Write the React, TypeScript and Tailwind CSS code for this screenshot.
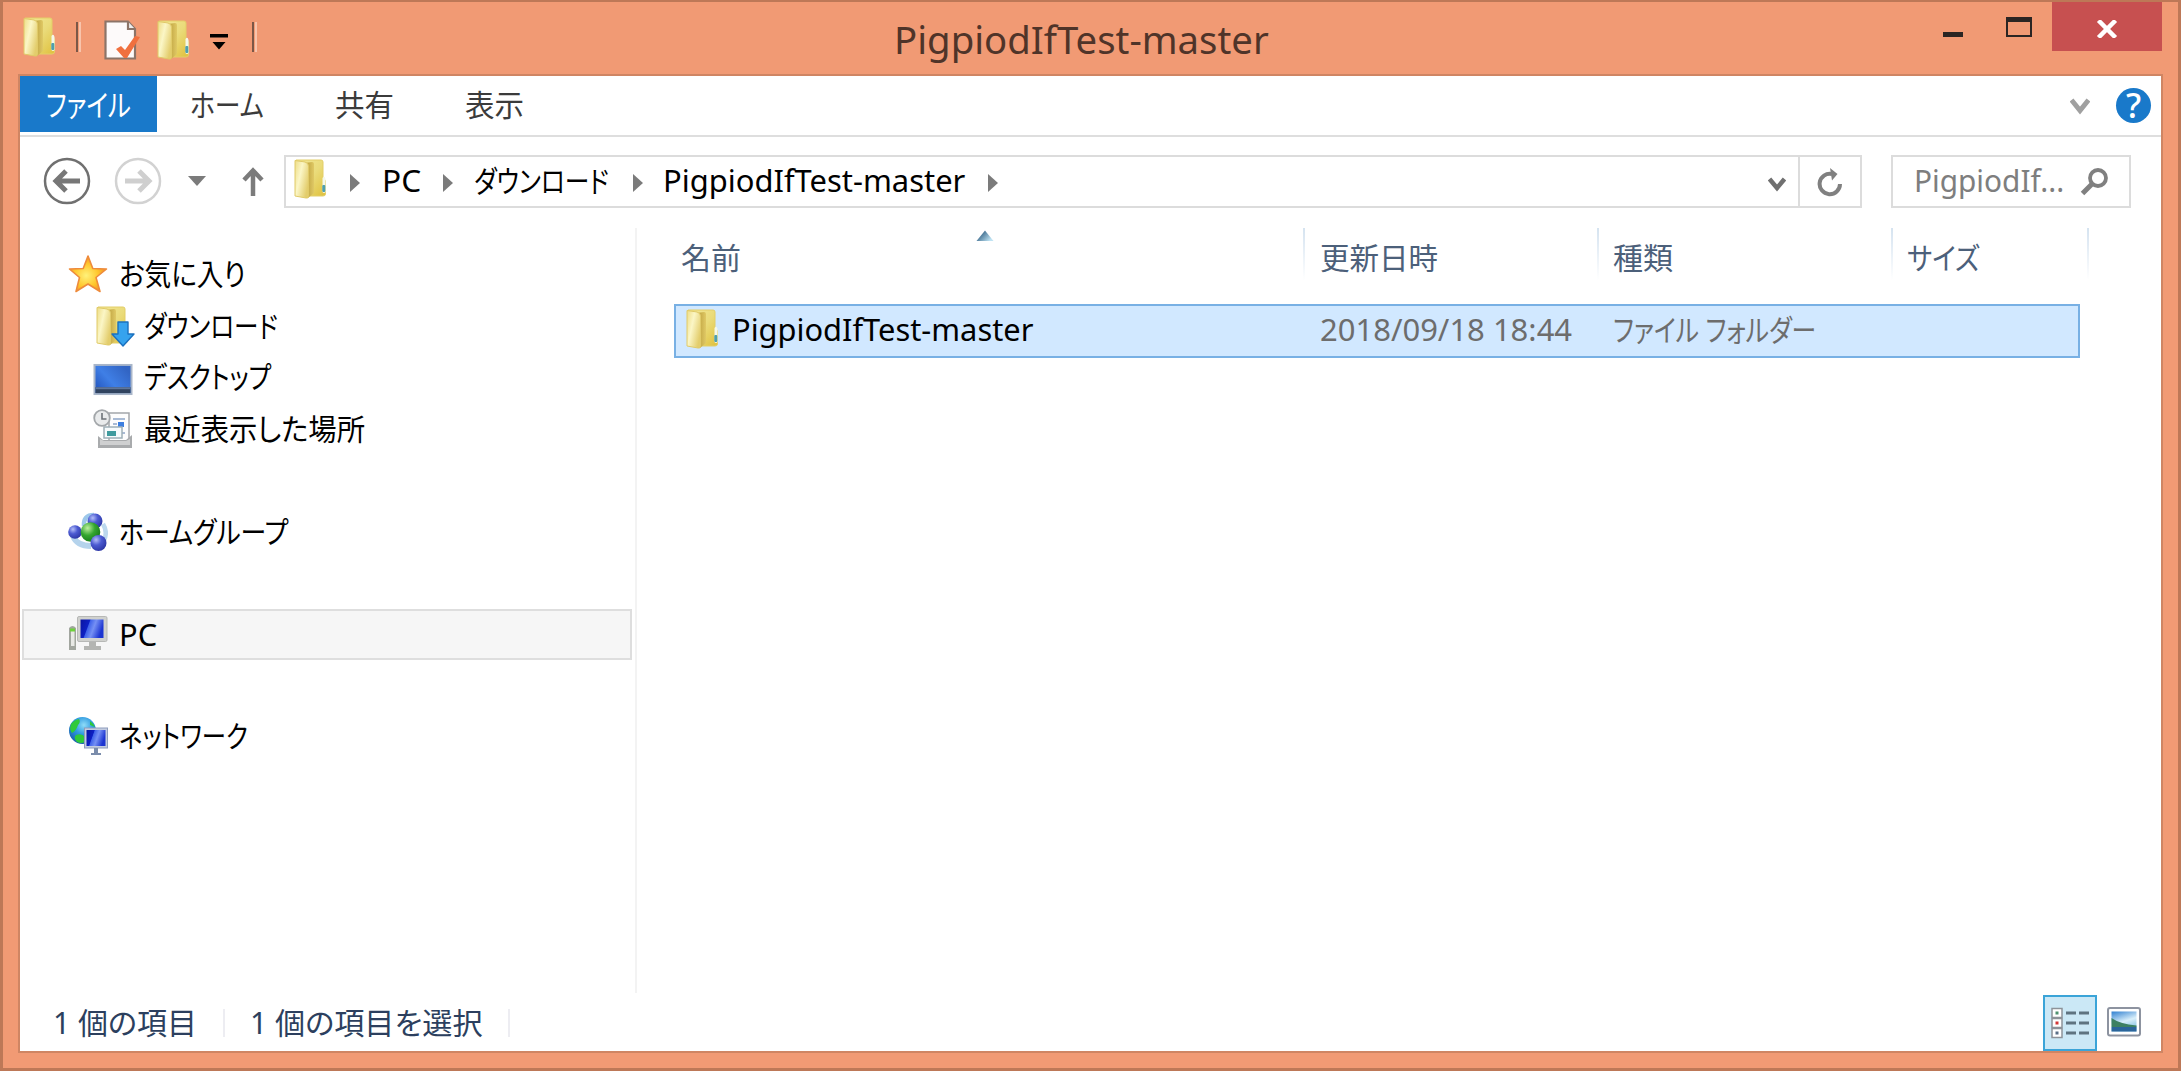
import { useLayoutEffect, useRef, useState } from "react";
import type { ReactNode } from "react";

/** A single line of text, condensed or widened to occupy exactly `w` pixels. */
function Line({ w, children, className = "" }: { w: number; children: ReactNode; className?: string }) {
  const ref = useRef<HTMLSpanElement>(null);
  const [scale, setScale] = useState(1);
  useLayoutEffect(() => {
    if (ref.current) setScale(w / ref.current.offsetWidth);
  }, [w]);
  return (
    <span className={"block shrink-0 whitespace-nowrap " + className} style={{ width: w }}>
      <span ref={ref} className="inline-block origin-left" style={{ transform: `scaleX(${scale})` }}>
        {children}
      </span>
    </span>
  );
}

function Folder({ className = "", arrow = false }: { className?: string; arrow?: boolean }) {
  return (
    <svg viewBox="0 0 32 40" className={"block h-[40px] w-[32px] shrink-0 overflow-visible " + className}>
      <defs>
        <linearGradient id="fBack" x1="0" x2="1" y1="0" y2="1">
          <stop offset="0" stopColor="#f3e896" />
          <stop offset="0.500" stopColor="#eadb7a" />
          <stop offset="1" stopColor="#dfc03c" />
        </linearGradient>
        <linearGradient id="fFront" x1="0" x2="1" y1="0" y2="0.600">
          <stop offset="0" stopColor="#eedd86" />
          <stop offset="0.450" stopColor="#fbf6c6" />
          <stop offset="1" stopColor="#e3cd6c" />
        </linearGradient>
        <linearGradient id="fMid" x1="0" x2="1" y1="0" y2="0">
          <stop offset="0" stopColor="#b99c3a" />
          <stop offset="1" stopColor="#e0c965" />
        </linearGradient>
      </defs>
      <path d="M2 1H27Q29 1 29 3V18L31.500 22V35Q31.500 37 29 37H14L2 36Z" fill="url(#fBack)" stroke="#e3ce68" strokeWidth="1" />
      <path d="M11 4L18 3Q20 3 20 5V34L14 39Z" fill="url(#fMid)" />
      <path d="M1 1.500L11 3Q14.500 4 14.500 7V37.500Q14.500 39.500 12 39L1 37Z" fill="url(#fFront)" stroke="#e0ca68" strokeWidth="1" />
      {!arrow && <path d="M28.500 19Q30.500 16 31.500 20V33Q30 35 28.500 33Z" fill="#f4f7ea" />}
      {!arrow && <rect x="28.300" y="26" width="3" height="7" rx="1" fill="#4f9fae" />}
      {arrow && (
        <path d="M22 16H32V28H38L27 40L16 28H22Z" fill="#36a3ee" stroke="#1b71bf" strokeWidth="1.400" strokeLinejoin="round" />
      )}
    </svg>
  );
}

function CheckedPage() {
  return (
    <svg viewBox="0 0 36 40" className="ml-[23px] block h-[40px] w-[36px] shrink-0">
      <path d="M1.500 1.500H24L31 9V38.500H1.500Z" fill="#fdfafa" stroke="#8c7468" strokeWidth="2.200" />
      <path d="M24 1.500V9H31" fill="#eee" stroke="#8c7468" strokeWidth="2.200" />
      <path d="M12 29L17 26L21 30L31 16L36 17L23 38H20Z" fill="#f0703f" />
    </svg>
  );
}

function Star() {
  return (
    <svg viewBox="0 0 40 40" className="block h-[40px] w-[40px] shrink-0">
      <defs>
        <radialGradient id="star" cx="0.450" cy="0.550" r="0.600">
          <stop offset="0" stopColor="#fff27a" />
          <stop offset="0.550" stopColor="#ffc62c" />
          <stop offset="1" stopColor="#f08322" />
        </radialGradient>
      </defs>
      <path d="M20 2L24.800 14.500L38.500 15L28 23.500L32 37.500L20 30L8 37.500L11.500 23.500L1.500 15L15.200 14.500Z" fill="url(#star)" stroke="#ee8b3c" strokeWidth="1.600" strokeLinejoin="round" />
    </svg>
  );
}

function Desktop() {
  return (
    <svg viewBox="0 0 40 34" preserveAspectRatio="none" className="block h-[33px] w-[40px] shrink-0">
      <defs>
        <linearGradient id="desk" x1="0" x2="1" y1="1" y2="0.300">
          <stop offset="0" stopColor="#1f4fb8" />
          <stop offset="0.500" stopColor="#3f7fe6" />
          <stop offset="1" stopColor="#3265c4" />
        </linearGradient>
      </defs>
      <rect x="0.500" y="1" width="39" height="32" fill="#a9b6c9" />
      <rect x="2.500" y="3" width="35" height="28" fill="url(#desk)" />
      <rect x="2.500" y="25" width="35" height="6" fill="#30435f" />
      <rect x="2.500" y="25" width="35" height="2" fill="#5f769b" />
    </svg>
  );
}

function Recent() {
  return (
    <svg viewBox="0 0 40 40" className="block h-[40px] w-[40px] shrink-0">
      <rect x="16" y="4" width="20" height="28" fill="#fdfdfd" stroke="#a3a6aa" strokeWidth="1.500" />
      <path d="M20 10H32M20 15H24M20 20H24M27 24H32" stroke="#a9bbd5" strokeWidth="2" />
      <rect x="25" y="13" width="6" height="5" fill="#3d7fe0" />
      <rect x="11" y="18" width="18" height="11" fill="#f7fbfc" stroke="#9fb0b8" strokeWidth="1.500" />
      <rect x="14" y="22" width="9" height="5" fill="#3f9b9e" />
      <circle cx="9" cy="9" r="7.800" fill="#e9ebec" stroke="#a3a7aa" strokeWidth="1.800" />
      <path d="M9 4V10H13.500" fill="none" stroke="#6d7378" strokeWidth="1.600" />
      <path d="M5 27L10 31H33L39 26V39H5Z" fill="#a9abad" />
      <path d="M7 30L11 32H33L37 30V36H7Z" fill="#cfd0d1" />
    </svg>
  );
}

function HomeGroup() {
  return (
    <svg viewBox="0 0 40 40" className="block h-[40px] w-[40px] shrink-0">
      <defs>
        <radialGradient id="hb" cx="0.350" cy="0.300" r="0.750">
          <stop offset="0" stopColor="#b3bdf8" />
          <stop offset="0.450" stopColor="#4c5bd2" />
          <stop offset="1" stopColor="#2b35a3" />
        </radialGradient>
        <radialGradient id="hg" cx="0.350" cy="0.300" r="0.750">
          <stop offset="0" stopColor="#bff0a0" />
          <stop offset="0.500" stopColor="#34a62f" />
          <stop offset="1" stopColor="#167a1a" />
        </radialGradient>
      </defs>
      <path d="M16 14Q15 3 26 3" fill="none" stroke="#9cc7ea" strokeWidth="4.500" />
      <path d="M35 12Q40 20 36 28" fill="none" stroke="#bcd8ee" strokeWidth="4.500" />
      <path d="M5 24Q9 34 23 34" fill="none" stroke="#b5d3ec" strokeWidth="6" />
      <circle cx="27" cy="9" r="7.500" fill="url(#hb)" />
      <circle cx="7" cy="20" r="6.800" fill="url(#hb)" />
      <circle cx="22.500" cy="20" r="9.800" fill="url(#hg)" />
      <circle cx="30.500" cy="31" r="8" fill="url(#hb)" />
    </svg>
  );
}

function ScreenGradient() {
  return (
    <defs>
      <linearGradient id="scr" x1="0" x2="1" y1="0" y2="0.300">
        <stop offset="0" stopColor="#0a14a0" />
        <stop offset="0.380" stopColor="#0d20c4" />
        <stop offset="0.420" stopColor="#3f63ea" />
        <stop offset="0.650" stopColor="#7590f4" />
        <stop offset="1" stopColor="#1c35d2" />
      </linearGradient>
    </defs>
  );
}

function Computer() {
  return (
    <svg viewBox="0 0 40 36" className="mb-[3px] block h-[36px] w-[40px] shrink-0">
      <ScreenGradient />
      <rect x="9.500" y="1.500" width="29.500" height="25" rx="1.500" fill="#d0d1ce" stroke="#b7b8b6" />
      <rect x="12.500" y="4.500" width="23" height="18.500" fill="url(#scr)" />
      <path d="M21 27H28V31H33V35H16V31H21Z" fill="#b4b5b2" />
      <path d="M1 13Q4.500 9 8 13V35H1Z" fill="#a2a69f" />
      <rect x="3" y="15" width="3.500" height="16" fill="#e8e9e5" />
      <rect x="2" y="13.500" width="5" height="3" fill="#6ed23c" />
    </svg>
  );
}

function Network() {
  return (
    <svg viewBox="0 0 40 40" className="block h-[40px] w-[40px] shrink-0">
      <ScreenGradient />
      <defs>
        <radialGradient id="globe" cx="0.550" cy="0.300" r="0.750">
          <stop offset="0" stopColor="#8fdcf8" />
          <stop offset="0.450" stopColor="#2f9ae0" />
          <stop offset="1" stopColor="#1459a8" />
        </radialGradient>
      </defs>
      <circle cx="14.500" cy="14.500" r="13.500" fill="url(#globe)" />
      <path d="M3 8Q6 4 11 3Q13 6 10 9Q8 15 4 17Q1 14 3 8ZM8 19Q14 17 17 21V26Q13 28 9 26Q5 22 8 19ZM22 5Q25 7 27 11L22 9Z" fill="#2fc93a" />
      <rect x="16.500" y="12" width="23" height="20" fill="#c3cce0" stroke="#8f9dbd" />
      <rect x="18.500" y="14" width="19" height="16" fill="url(#scr)" />
      <path d="M26 32H30V37H33V39H23V37H26Z" fill="#7a8cab" />
    </svg>
  );
}

function CrumbArrow({ className }: { className: string }) {
  return (
    <svg viewBox="0 0 10 18" className={"block h-[18px] w-[10px] shrink-0 " + className}>
      <path d="M0 0L10 9L0 18Z" fill="#7b7b7b" />
    </svg>
  );
}

function TitleBar() {
  return (
    <header className="flex h-[72px] shrink-0 items-start pl-[20px]">
      <Folder className="mt-[15px]" />
      <div className="ml-[21px] mt-[20px] h-[30px] w-[5px] shrink-0 border-l-[2.500px] border-r-2 border-l-[#7b5747] border-r-[#f8c4ac]" />
      <div className="mt-[18px]"><CheckedPage /></div>
      <Folder className="ml-[17px] mt-[18px]" />
      <svg viewBox="0 0 18 16" className="ml-[21px] mt-[32px] block h-[16px] w-[18px] shrink-0">
        <path d="M0 0H18V3.500H0ZM2.500 8H15.500L9 15.500Z" fill="#000" />
      </svg>
      <div className="ml-[24px] mt-[20px] h-[30px] w-[5px] shrink-0 border-l-[2.500px] border-r-2 border-l-[#7b5747] border-r-[#f8c4ac]" />
      <h1 className="ml-[637px] mt-[11px] text-[37.500px] leading-[54px] text-[#4f3429]">
        <Line w={375}>PigpiodIfTest-master</Line>
      </h1>
      <div className="ml-auto flex items-start">
        <div className="mt-[30px] h-[5px] w-[20px] bg-[#2b2523]" />
        <div className="ml-[43px] mt-[15px] h-[20px] w-[26px] border-[2.500px] border-t-[5px] border-[#2b2523]" />
        <button className="ml-[20px] mr-[16px] flex h-[49px] w-[110px] items-center justify-center bg-[#c75050]">
          <svg viewBox="0 0 22 18" className="mt-[4px] h-[18px] w-[22px]">
            <path d="M2.500 0.500L19.500 17.500M19.500 0.500L2.500 17.500" stroke="#fff" strokeWidth="4.500" />
          </svg>
        </button>
      </div>
    </header>
  );
}

function Ribbon() {
  return (
    <nav className="flex h-[61px] shrink-0 items-start border-b-2 border-[#dedede] text-[30px] leading-[58px] text-[#3b3b3b]">
      <div className="h-[56px] w-[137px] bg-[#1979ca] pl-[26px] leading-[57px] text-white"><Line w={85}>ファイル</Line></div>
      <Line w={74} className="ml-[33px]">ホーム</Line>
      <Line w={59} className="ml-[71px]">共有</Line>
      <Line w={59} className="ml-[71px]">表示</Line>
      <svg viewBox="0 0 20 17" className="ml-auto mt-[22px] block h-[17px] w-[20px]">
        <path d="M1.500 2L10 12.500L18.500 2" fill="none" stroke="#a0a0a0" strokeWidth="5" />
      </svg>
      <div className="ml-[26px] mr-[10px] mt-[12px] flex h-[35px] w-[35px] items-center justify-center rounded-full bg-[#1979ca] text-[34px] font-medium leading-[35px] text-white">?</div>
    </nav>
  );
}

function NavRow() {
  return (
    <div className="flex h-[88px] shrink-0 items-start pl-[23px] pt-[18px] text-[30px] leading-[49px] text-black">
      <svg viewBox="0 0 48 48" className="mt-[2px] block h-[48px] w-[48px] shrink-0">
        <circle cx="24" cy="24" r="22" fill="none" stroke="#707070" strokeWidth="2.500" />
        <path d="M37 24H13M23 14L13 24L23 34" fill="none" stroke="#777" strokeWidth="5" />
      </svg>
      <svg viewBox="0 0 48 48" className="ml-[23px] mt-[2px] block h-[48px] w-[48px] shrink-0">
        <circle cx="24" cy="24" r="22" fill="none" stroke="#d2d2d2" strokeWidth="2.500" />
        <path d="M11 24H35M25 14L35 24L25 34" fill="none" stroke="#cfcfcf" strokeWidth="5" />
      </svg>
      <svg viewBox="0 0 18 10" className="ml-[26px] mt-[21px] block h-[10px] w-[18px] shrink-0">
        <path d="M0 0H18L9 10Z" fill="#7b7b7b" />
      </svg>
      <svg viewBox="0 0 22 30" className="ml-[36px] mt-[12px] block h-[30px] w-[22px] shrink-0">
        <path d="M11 29V4M2 13L11 3.500L20 13" fill="none" stroke="#7b7b7b" strokeWidth="4.500" />
      </svg>
      <div className="ml-[20px] flex h-[53px] w-[1578px] shrink-0 border-2 border-[#dcdcdc]">
        <Folder className="ml-[8px] mt-[2px]" />
        <CrumbArrow className="ml-[24px] mt-[17px]" />
        <Line w={39} className="-mt-px ml-[22px]">PC</Line>
        <CrumbArrow className="ml-[22px] mt-[17px]" />
        <Line w={135} className="-mt-px ml-[21px]">ダウンロード</Line>
        <CrumbArrow className="ml-[24px] mt-[17px]" />
        <Line w={302} className="-mt-px ml-[20px]">PigpiodIfTest-master</Line>
        <CrumbArrow className="ml-[23px] mt-[17px]" />
        <svg viewBox="0 0 18 15" className="ml-auto mr-[12px] mt-[20px] block h-[15px] w-[18px] shrink-0">
          <path d="M1.500 2L9 11L16.500 2" fill="none" stroke="#707070" strokeWidth="4.500" />
        </svg>
        <div className="w-[62px] shrink-0 border-l-2 border-[#dcdcdc] pl-[17px] pt-[11px]">
          <svg viewBox="0 0 26 29" className="block h-[29px] w-[26px]">
            <path d="M15 6A10.200 10.200 0 1 0 23 16" fill="none" stroke="#808080" strokeWidth="4" />
            <path d="M13 0L20.500 6L15 12.500Z" fill="#808080" />
          </svg>
        </div>
      </div>
      <div className="ml-[29px] flex h-[53px] w-[240px] shrink-0 border-2 border-[#dcdcdc] pl-[21px] text-[#7e7e7e]">
        <Line w={150} className="-mt-px">PigpiodIf...</Line>
        <svg viewBox="0 0 28 28" className="ml-[16px] mt-[11px] block h-[28px] w-[28px] shrink-0">
          <circle cx="18" cy="10" r="8" fill="none" stroke="#808080" strokeWidth="3.800" />
          <path d="M12 16L2.500 25.500" stroke="#808080" strokeWidth="5" />
        </svg>
      </div>
    </div>
  );
}

function TreeItem({ icon, w, label, nested = false, className = "" }: { icon: ReactNode; w: number; label: string; nested?: boolean; className?: string }) {
  return (
    <li className={"flex h-[51.700px] items-center " + (nested ? "pl-[73px] " : "pl-[48px] ") + className}>
      {icon}
      <Line w={w} className="ml-[11px]">{label}</Line>
    </li>
  );
}

function Sidebar() {
  return (
    <aside className="w-[617px] shrink-0 border-r-2 border-[#f3f3f3] pt-[20px] text-[30px] leading-[52px] text-black">
      <ul>
        <TreeItem icon={<Star />} w={127} label="お気に入り" />
        <TreeItem nested icon={<Folder arrow className="ml-[2px] mr-[4px] w-[34px]!" />} w={134} label="ダウンロード" />
        <TreeItem nested icon={<div className="pt-[5px]"><Desktop /></div>} w={127} label="デスクトップ" />
        <TreeItem nested icon={<Recent />} w={221} label="最近表示した場所" />
        <TreeItem className="mt-[51px]" icon={<HomeGroup />} w={169} label="ホームグループ" />
        <li className="ml-[2px] mt-[52px] flex h-[51px] w-[610px] items-center border-2 border-[#dedede] bg-[#f6f6f6] pl-[44px]">
          <Computer />
          <Line w={38} className="ml-[11px]">PC</Line>
        </li>
        <TreeItem className="mt-[50px]" icon={<Network />} w={129} label="ネットワーク" />
      </ul>
    </aside>
  );
}

function ColumnEdge() {
  return <div className="h-[52px] w-[2px] shrink-0 bg-gradient-to-b from-[#d5e3f0] to-white" />;
}

function FileList() {
  return (
    <main className="flex-1 text-[30px]">
      <div className="flex h-[76px] leading-[60px] text-[#4c607a]">
        <Line w={60} className="ml-[44px]">名前</Line>
        <svg viewBox="0 0 18 11" className="ml-[235px] mt-[2px] block h-[11px] w-[18px] shrink-0">
          <defs>
            <linearGradient id="sort" x1="0" x2="1" y1="0" y2="0.600">
              <stop offset="0.300" stopColor="#3c6a8c" />
              <stop offset="1" stopColor="#bfe3f3" />
            </linearGradient>
          </defs>
          <path d="M9 0.500L17.500 11H0.500Z" fill="url(#sort)" />
        </svg>
        <div className="w-[309px] shrink-0" />
        <ColumnEdge />
        <Line w={118} className="ml-[15px]">更新日時</Line>
        <div className="w-[159px] shrink-0" />
        <ColumnEdge />
        <Line w={60} className="ml-[14px]">種類</Line>
        <div className="w-[218px] shrink-0" />
        <ColumnEdge />
        <Line w={73} className="ml-[14px]">サイズ</Line>
        <div className="w-[107px] shrink-0" />
        <ColumnEdge />
      </div>
      <div className="ml-[37px] flex h-[54px] w-[1406px] border-2 border-[#78b0e4] bg-[#d1e8ff] leading-[48px] text-[#6d6d6d]">
        <Folder className="ml-[10px] mt-[3px]" />
        <Line w={301} className="ml-[14px] text-black">PigpiodIfTest-master</Line>
        <Line w={252} className="ml-[287px]">2018/09/18 18:44</Line>
        <Line w={203} className="ml-[41px]">ファイル フォルダー</Line>
      </div>
    </main>
  );
}

function StatusBar() {
  return (
    <footer className="flex h-[58px] shrink-0 items-start pl-[33px] text-[30px] leading-[59px] text-[#2c3f5e]">
      <Line w={144}>1 個の項目</Line>
      <div className="ml-[26px] mt-[16px] h-[28px] w-[2px] bg-[#ededf2]" />
      <Line w={233} className="ml-[25px]">1 個の項目を選択</Line>
      <div className="ml-[25px] mt-[16px] h-[28px] w-[2px] bg-[#ededf2]" />
      <div className="ml-auto mt-[2px] flex h-[56px] w-[54px] items-center justify-center border-[2.500px] border-[#3ba4d8] bg-[#cbe8f6]">
        <svg viewBox="0 0 38 32" className="block h-[32px] w-[38px]">
          {["#4e9270", "#d33636", "#5a6f87"].map((dot, i) => (
            <g key={dot} transform={`translate(0 ${i * 10})`}>
              <rect x="1" y="1.500" width="10" height="9" fill="#fff" stroke="#8d9299" strokeWidth="1.500" />
              <rect x="4.500" y="4.500" width="3" height="3" fill={dot} />
              <path d="M15 6H25M28 6H38" stroke="#5e7380" strokeWidth="2.800" />
            </g>
          ))}
        </svg>
      </div>
      <svg viewBox="0 0 34 30" className="ml-[10px] mr-[20px] mt-[14px] block h-[30px] w-[34px] shrink-0">
        <defs>
          <linearGradient id="sky" x1="0" x2="0.400" y1="0" y2="1">
            <stop offset="0" stopColor="#2f7fd0" />
            <stop offset="0.600" stopColor="#d9effa" />
            <stop offset="1" stopColor="#8cc5e4" />
          </linearGradient>
        </defs>
        <rect x="1" y="1" width="32" height="27.500" rx="2" fill="#fff" stroke="#8d93a0" strokeWidth="2" />
        <rect x="4.500" y="4.500" width="25" height="20" fill="url(#sky)" />
        <path d="M4.500 11Q13 17 29.500 18.500V20H4.500Z" fill="#3d8062" />
        <path d="M4.500 20H29.500V24.500H4.500Z" fill="#2b659a" />
      </svg>
    </footer>
  );
}

export default function App() {
  return (
    <div className="flex h-[1071px] w-[2181px] flex-col overflow-hidden border-[3px] border-t-2 border-[#bd7857] bg-[#f19a74] font-['Noto_Sans','Noto_Sans_CJK_JP',sans-serif] [font-feature-settings:'palt']">
      <TitleBar />
      <div className="mx-[15px] flex h-[979px] shrink-0 flex-col border-2 border-[#cf8563] bg-white">
        <Ribbon />
        <NavRow />
        <div className="flex h-[768px] shrink-0 pt-[3px]">
          <Sidebar />
          <FileList />
        </div>
        <StatusBar />
      </div>
    </div>
  );
}
